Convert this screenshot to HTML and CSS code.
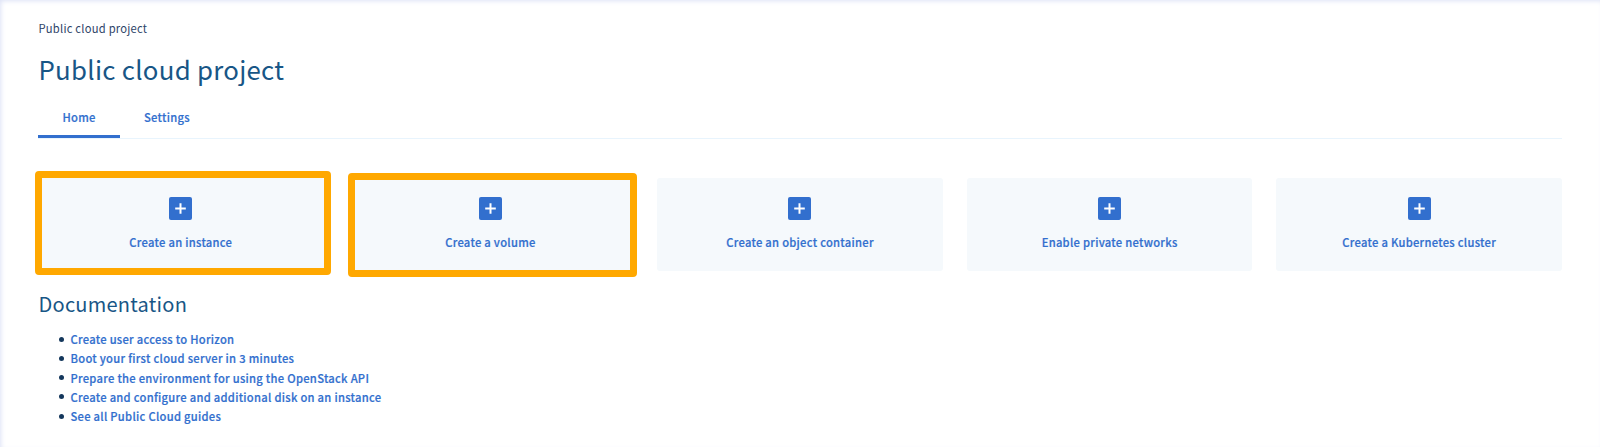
FILE: index.html
```html
<!DOCTYPE html>
<html lang="en">
<head>
<meta charset="utf-8">
<title>Public cloud project</title>
<link rel="stylesheet" href="styles.css">
</head>
<body>
<main class="page">
  <nav class="breadcrumb"><span>Public cloud project</span></nav>
  <h1 class="title"><span>Public cloud project</span></h1>
  <div class="tabs">
    <a class="tab tab-active"><span>Home</span></a>
    <a class="tab"><span>Settings</span></a>
  </div>
  <section class="cards">
    <a class="card"><svg class="plus" viewBox="0 0 23 23"><rect width="23" height="23" rx="2"/><path d="M11.5 6.2v10.6M6.2 11.5h10.6"/></svg><span>Create an instance</span><i class="highlight highlight-instance"></i></a>
    <a class="card"><svg class="plus" viewBox="0 0 23 23"><rect width="23" height="23" rx="2"/><path d="M11.5 6.2v10.6M6.2 11.5h10.6"/></svg><span>Create a volume</span><i class="highlight highlight-volume"></i></a>
    <a class="card"><svg class="plus" viewBox="0 0 23 23"><rect width="23" height="23" rx="2"/><path d="M11.5 6.2v10.6M6.2 11.5h10.6"/></svg><span>Create an object container</span></a>
    <a class="card"><svg class="plus" viewBox="0 0 23 23"><rect width="23" height="23" rx="2"/><path d="M11.5 6.2v10.6M6.2 11.5h10.6"/></svg><span>Enable private networks</span></a>
    <a class="card"><svg class="plus" viewBox="0 0 23 23"><rect width="23" height="23" rx="2"/><path d="M11.5 6.2v10.6M6.2 11.5h10.6"/></svg><span>Create a Kubernetes cluster</span></a>
  </section>
  <h2 class="subtitle"><span>Documentation</span></h2>
  <ul class="guides">
    <li><a>Create user access to Horizon</a></li>
    <li><a>Boot your first cloud server in 3 minutes</a></li>
    <li><a>Prepare the environment for using the OpenStack API</a></li>
    <li><a>Create and configure and additional disk on an instance</a></li>
    <li><a>See all Public Cloud guides</a></li>
  </ul>
</main>
</body>
</html>
```
FILE: styles.css
```css
* { box-sizing: border-box; }

body {
  margin: 0;
  background: #fff;
  font-family: "Noto Sans CJK SC", "Open Sans", sans-serif;
  font-size: 11.2px;
  line-height: 20px;
  letter-spacing: 0.28px;
  color: #2e4468;
}

.page {
  height: 447px;
  padding: 18px 38px 0;
  overflow: hidden;
  box-shadow: inset 2px 2px 5px -1px #dde2f6;
}

.breadcrumb {
  height: 31px;
  padding-left: 0.5px;
  letter-spacing: 0.23px;
}

.title {
  margin: 0;
  padding-left: 0.5px;
  font-size: 25.8px;
  font-weight: 400;
  line-height: 40px;
  color: #185686;
}

.tabs {
  display: flex;
  height: 50px;
  padding-top: 18px;
  border-bottom: 1px solid #e8f4fd;
}

.tab {
  height: 31px;
  padding: 0 24px;
  font-weight: 500;
  color: #326fce;
  -webkit-text-stroke: 0.2px #326fce;
}

.tab-active {
  width: 82px;
  padding-left: 24.5px;
  border-bottom: 3px solid #326fce;
}

.cards {
  display: grid;
  grid-template-columns: repeat(5, 1fr);
  gap: 24px;
  margin-top: 39px;
}

.card {
  position: relative;
  display: flex;
  flex-direction: column;
  align-items: center;
  height: 93px;
  padding-top: 19px;
  gap: 12px;
  border-radius: 3px;
  background: #f5f9fc;
  font-weight: 500;
  line-height: 20px;
  color: #326fce;
  -webkit-text-stroke: 0.2px #326fce;
}

.plus { width: 23px; height: 23px; flex: none; }
.plus rect { fill: #326fce; }
.plus path { stroke: #fff; stroke-width: 2; }

.highlight {
  position: absolute;
  border: 7px solid #ffa800;
  border-radius: 4px;
}

.highlight-instance { left: -3px; top: -7px; width: 296px; height: 104px; }
.highlight-volume { left: 0; top: -5px; width: 289px; height: 104px; }

.subtitle {
  margin: 18px 0 0;
  padding-left: 0.5px;
  font-size: 20px;
  font-weight: 400;
  line-height: 30px;
  letter-spacing: 0.25px;
  color: #185686;
}

.guides {
  margin: 10.6px 0 0;
  padding: 0;
  list-style: none;
}

.guides li {
  display: flex;
  align-items: center;
  gap: 6.5px;
  height: 19.25px;
  padding-left: 21px;
  font-weight: 500;
  color: #326fce;
  -webkit-text-stroke: 0.2px #326fce;
}

.guides li::before {
  content: "";
  width: 5px;
  height: 5px;
  border-radius: 50%;
  background: #14375c;
}
```
